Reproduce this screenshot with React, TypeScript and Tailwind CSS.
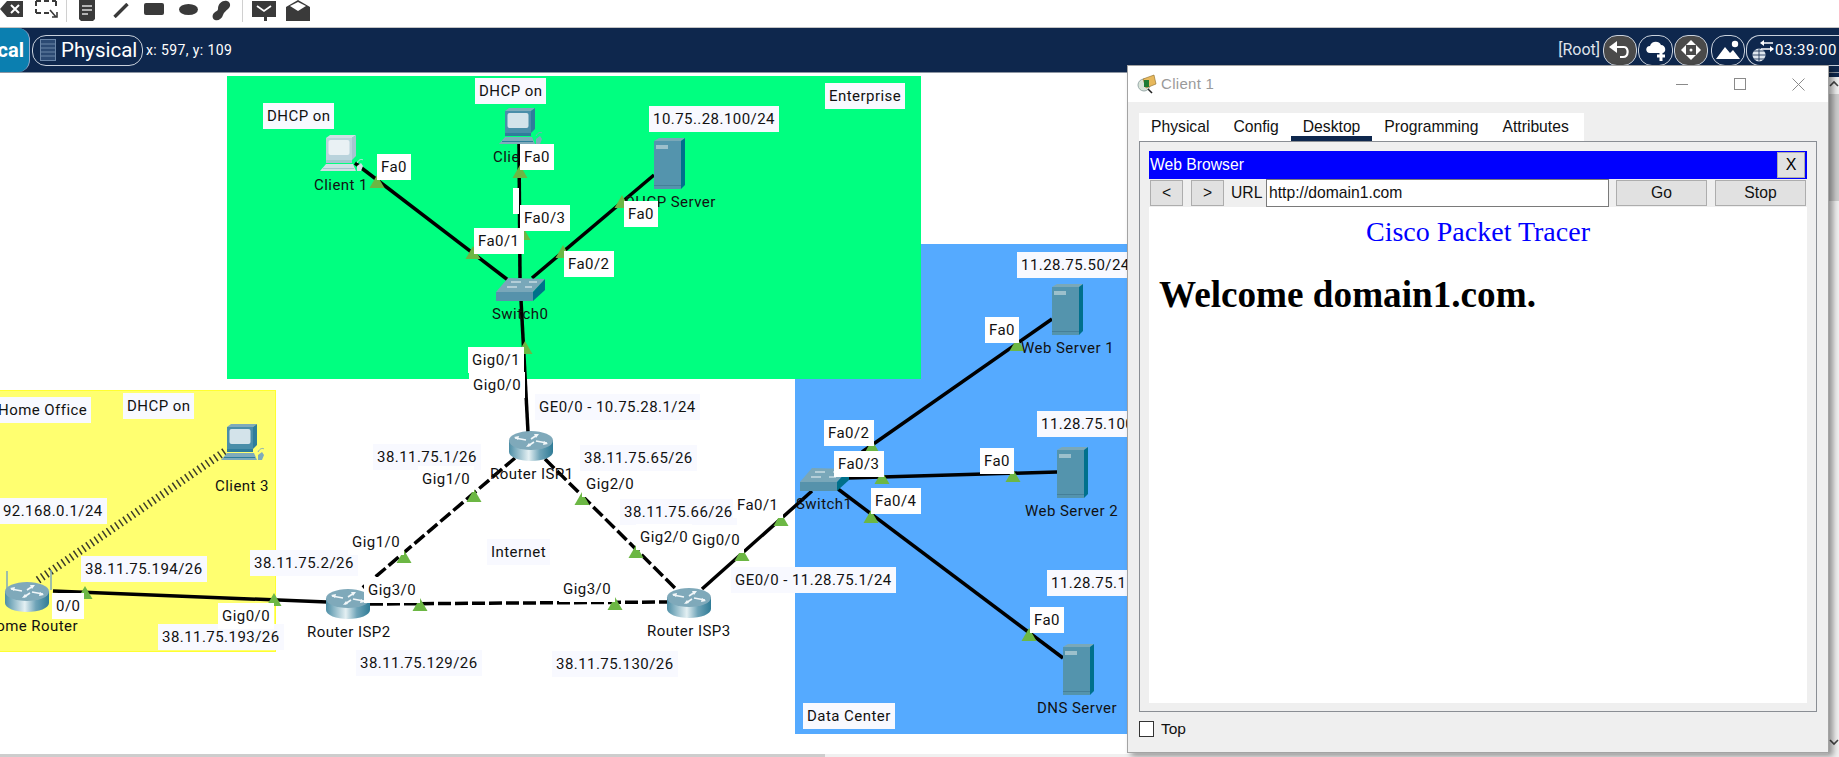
/**
 * Packet Tracer physical workspace with a Client 1 web browser window on top.
 */

import type { ReactNode } from "react";

const TRIANGLES: [number, number][] = [
  [377, 182], [520, 172], [473, 253], [523, 234], [563, 252], [622, 202], [525, 348],
  [1017, 345], [872, 447], [882, 478], [1013, 476], [871, 517], [1029, 635], [781, 520],
  [742, 555], [636, 552], [582, 499], [474, 496], [615, 604], [420, 605], [404, 557],
  [85, 593], [274, 600],
];

function Note({ className, children }: { className: string; children: ReactNode }) {
  return (
    <div className={`absolute h-[26px] bg-[#f8f9ff] px-[4px] text-[15px] leading-[26px] tracking-[0.45px] whitespace-nowrap text-[#111] ${className}`}>
      {children}
    </div>
  );
}

function Port({ className, children }: { className: string; children: ReactNode }) {
  return (
    <div className={`absolute h-[26px] bg-white px-[4px] text-[15px] leading-[26px] tracking-[0.45px] whitespace-nowrap text-[#111] ${className}`}>
      {children}
    </div>
  );
}

function Name({ className, children }: { className: string; children: ReactNode }) {
  return (
    <div className={`absolute h-[26px] text-[15px] leading-[26px] tracking-[0.45px] whitespace-nowrap text-[#111] ${className}`}>
      {children}
    </div>
  );
}

function Pc({ x, y, faded }: { x: number; y: number; faded?: boolean }) {
  const front = faded ? "#b9d3dc" : "#4a8ea9";
  const dark = faded ? "#a5c5d0" : "#2f7d9b";
  const screen = faded ? "#e9f1f4" : "#d3e3ea";
  const top = faded ? "#cfe0e6" : "#7fabbb";
  return (
    <g transform={`translate(${x} ${y})`}>
      <polygon points="6,3 10,0 36,0 32,3" fill={top} />
      <polygon points="32,3 36,0 36,21 32,25" fill={dark} />
      <rect x="6" y="3" width="26" height="22" fill={front} />
      <rect x="8.5" y="5" width="21" height="15" rx="2" fill={screen} />
      <rect x="6" y="25" width="26" height="3" fill={dark} />
      <polygon points="6,29 33,29 36,36 0,36" fill={top} />
      <rect x="3" y="33" width="31" height="1" fill={dark} />
      <path d="M37 28 C39 24 42 24 43 25" stroke={top} strokeWidth="1" fill="none" />
      <polygon points="37,31 41,28 43,31 41,36 37,36" fill={top} />
    </g>
  );
}

function Router({ x, y }: { x: number; y: number }) {
  return (
    <g transform={`translate(${x} ${y})`}>
      <path d="M0 9 V21 C0 26 10 30 22 30 C34 30 44 26 44 21 V9 Z" fill="url(#routerSide)" />
      <ellipse cx="22" cy="9.5" rx="22" ry="9.5" fill="#7fa9ba" />
      <g fill="none" stroke="#f2f7f9" strokeWidth="1.6">
        <path d="M6 7 L17 9" />
        <path d="M27 10 L38 12" />
        <path d="M19 15 L25 11" />
        <path d="M22 8 L28 4" />
      </g>
      <g fill="#f2f7f9">
        <polygon points="5,6 10,5 9,9" />
        <polygon points="39,13 34,14 35,10" />
        <polygon points="17,16 22,15 20,12" />
        <polygon points="30,3 25,3 27,7" />
      </g>
    </g>
  );
}

function Switch({ x, y }: { x: number; y: number }) {
  return (
    <g transform={`translate(${x} ${y})`}>
      <polygon points="12,0 49,1 37,14 0,14" fill="#79a7b9" />
      <rect x="0" y="14" width="37" height="9" fill="#5692ab" />
      <polygon points="37,14 49,1 49,12 37,23" fill="#00708a" />
      <g stroke="#eef5f7" strokeWidth="1">
        <path d="M15 4 H25" />
        <path d="M33 4 H41" />
        <path d="M11 9 H21" />
        <path d="M29 9 H36" />
      </g>
    </g>
  );
}

function Server({ x, y }: { x: number; y: number }) {
  return (
    <g transform={`translate(${x} ${y})`}>
      <polygon points="0,3 5,0 31,0 27,3" fill="#7aa8b8" />
      <rect x="0" y="3" width="27" height="48" fill="#5494ad" />
      <polygon points="27,3 31,0 31,47 27,51" fill="#00708c" />
      <rect x="2" y="7" width="12" height="4" fill="#9cc0cc" />
      <rect x="0" y="47" width="27" height="1" fill="#457f98" />
    </g>
  );
}

function Toolbar() {
  return (
    <div className="flex h-[28px] items-start border-b border-[#c4c4c4] bg-white">
      {/* Delete */}
      <svg className="ml-[0px] h-[18px] w-[24px]" viewBox="0 0 24 18">
        <path d="M7 1 H23 V17 H7 L0 9 Z" fill="#3a3a3a" />
        <path d="M11 5 L19 13 M19 5 L11 13" stroke="#fff" strokeWidth="2" />
      </svg>
      {/* Resize marquee */}
      <svg className="ml-[11px] h-[19px] w-[23px]" viewBox="0 0 23 19">
        <path d="M1 1 H21 M1 13 H14 M1 1 V13 M21 1 V9" stroke="#3a3a3a" strokeWidth="2" strokeDasharray="5 3" fill="none" />
        <path d="M15 10 L21 17 M17 17 H22 V12" stroke="#3a3a3a" strokeWidth="1.6" fill="none" />
      </svg>
      <div className="ml-[8px] h-[22px] w-px bg-[#d0d0d0]" />
      {/* Note */}
      <svg className="ml-[12px] h-[21px] w-[16px]" viewBox="0 0 16 21">
        <path d="M0 0 H16 V19 L14 21 H2 L0 19 Z" fill="#3a3a3a" />
        <path d="M3 6 H13 M3 10 H13 M3 14 H9" stroke="#ddd" strokeWidth="1.3" />
      </svg>
      {/* Line */}
      <svg className="ml-[18px] mt-[3px] h-[15px] w-[16px]" viewBox="0 0 16 15">
        <path d="M1.5 14 L14.5 1" stroke="#3a3a3a" strokeWidth="3.4" />
      </svg>
      {/* Rectangle */}
      <div className="ml-[15px] mt-[3px] h-[12px] w-[20px] rounded-[2px] bg-[#3a3a3a]" />
      {/* Ellipse */}
      <div className="ml-[15px] mt-[4px] h-[11px] w-[19px] rounded-[50%] bg-[#3a3a3a]" />
      {/* Freeform */}
      <svg className="ml-[14px] h-[21px] w-[19px]" viewBox="0 0 19 21">
        <path d="M6 9 C6 3 11 0 15 1 C19 2 19 7 16 9 C14 11 12 12 11 15 C10 19 6 21 3 20 C0 19 0 15 2 13 C4 11 6 11 6 9 Z" fill="#3a3a3a" />
      </svg>
      <div className="ml-[11px] h-[22px] w-px bg-[#d0d0d0]" />
      {/* Mail */}
      <svg className="ml-[9px] h-[22px] w-[24px]" viewBox="0 0 24 22">
        <path d="M0 1 H24 V17 H15 V21 H12 V17 H0 Z" fill="#3a3a3a" />
        <path d="M5 6 L12 11 L19 6" stroke="#fff" strokeWidth="1.8" fill="none" />
      </svg>
      {/* Open mail */}
      <svg className="ml-[10px] h-[21px] w-[24px]" viewBox="0 0 24 21">
        <path d="M0 7 L12 0 L24 7 V21 H0 Z" fill="#3a3a3a" />
        <path d="M4 6 L12 2 L20 6 L12 11 Z" fill="#fff" />
      </svg>
    </div>
  );
}

function ModeBar() {
  return (
    <div className="relative flex h-[45px] items-center border-b border-[#8d96a3] bg-[#0e274d] font-['Roboto',sans-serif] text-white">
      <div className="flex h-[44px] w-[30px] items-center justify-end self-start rounded-r-[12px] border-r border-[#9ac] bg-[#0b7fb0] text-[20px] font-bold">
        <span className="pr-[5px]">cal</span>
      </div>
      <div className="ml-[2px] flex h-[31px] w-[111px] items-center rounded-[14px] border border-[#c9d1dc] pl-[7px]">
        <svg className="h-[22px] w-[16px]" viewBox="0 0 16 22">
          <rect x="0.5" y="0.5" width="15" height="21" fill="#2c4a73" stroke="#6b86a8" />
          <path d="M0 5 H16 M0 9 H16 M0 13 H16 M0 17 H16" stroke="#6b86a8" />
        </svg>
        <span className="ml-[5px] text-[20.5px]">Physical</span>
      </div>
      <span className="ml-[3px] text-[14px] tracking-[0.4px]">x: 597, y: 109</span>
      <div className="ml-auto flex items-center">
        <span className="mr-[3px] text-[16px] text-[#dfe3ea]">[Root]</span>
        <div className="flex h-[31px] w-[34px] items-center justify-center rounded-[14px] border border-[#c9d1dc] bg-[#4a4a4a]">
          <svg className="h-[20px] w-[24px]" viewBox="0 0 24 20">
            <path d="M8 7 H16 C21 7 21 17 15 17 H12" stroke="#fff" strokeWidth="2.2" fill="none" />
            <polygon points="9,1 1,7 9,13" fill="#fff" />
          </svg>
        </div>
        <div className="ml-[1px] flex h-[31px] w-[35px] items-center justify-center rounded-[14px] border border-[#c9d1dc]">
          <svg className="h-[24px] w-[24px]" viewBox="0 0 24 24">
            <path d="M6 15 C1 15 1 8 6 8 C7 3 15 2 17 7 C22 7 23 15 18 15 Z" fill="#fff" />
            <path d="M17 13 V23 M13 18 H21" stroke="#fff" strokeWidth="3" />
          </svg>
        </div>
        <div className="ml-[1px] flex h-[31px] w-[34px] items-center justify-center rounded-[14px] border border-[#c9d1dc] bg-[#4a4a4a]">
          <svg className="h-[24px] w-[24px]" viewBox="0 0 24 24" fill="#fff">
            <polygon points="12,2 17,7 7,7" />
            <polygon points="12,22 17,17 7,17" />
            <polygon points="2,12 7,7 7,17" />
            <polygon points="22,12 17,7 17,17" />
            <circle cx="12" cy="12" r="1.5" />
          </svg>
        </div>
        <div className="ml-[3px] flex h-[31px] w-[34px] items-center justify-center rounded-[14px] border border-[#c9d1dc]">
          <svg className="h-[22px] w-[24px]" viewBox="0 0 24 22" fill="#fff">
            <circle cx="19" cy="5" r="3.2" />
            <polygon points="0,20 9,8 14,14 17,11 24,20" />
          </svg>
        </div>
        <div className="ml-[1px] flex h-[31px] w-[93px] items-center rounded-l-[14px] border border-r-0 border-[#c9d1dc] pl-[3px]">
          <svg className="h-[26px] w-[24px]" viewBox="0 0 24 26">
            <circle cx="9" cy="18" r="6.5" fill="#dfe6ee" />
            <path d="M2.5 18 H15.5 M9 11.5 V24.5 M4 14 H14 M4 22 H14" stroke="#0e274d" strokeWidth="0.8" />
            <path d="M13 6 H23 M11 12 H23" stroke="#fff" strokeWidth="1.6" />
            <polygon points="10,6 14,3 14,9" fill="#fff" />
            <polygon points="24,12 20,9 20,15" fill="#fff" />
          </svg>
          <span className="ml-[1px] text-[15px] tracking-[0.5px]">03:39:00</span>
        </div>
      </div>
    </div>
  );
}

function Workspace() {
  return (
    <div className="relative h-[681px] overflow-hidden bg-white font-['Roboto',sans-serif]">
      {/* Areas */}
      <div className="absolute left-[795px] top-[171px] h-[490px] w-[340px] bg-[#55aaff]" />
      <div className="absolute left-[227px] top-[3px] h-[303px] w-[694px] bg-[#00ff80]" />
      <div className="absolute left-[-2px] top-[317px] h-[262px] w-[278px] border border-[#ffff30] bg-[#ffff70]" />

      {/* Links and devices */}
      <svg className="absolute left-0 top-0 h-[681px] w-[1839px]" viewBox="0 73 1839 681">
        <defs>
          <linearGradient id="routerSide" x1="0" x2="1" y1="0" y2="0">
            <stop offset="0" stopColor="#4d8ea6" />
            <stop offset="0.45" stopColor="#e4f0f3" />
            <stop offset="0.7" stopColor="#6fa4b8" />
            <stop offset="1" stopColor="#2f7b96" />
          </linearGradient>
        </defs>
        <g stroke="#000" strokeWidth="3.5" fill="none">
          <path d="M355 163 L508 280" />
          <path d="M519 144 L520 278" />
          <path d="M654 175 L532 278" />
          <path d="M521 300 L528 432" />
          <path d="M1052 319 L862 452" />
          <path d="M1057 472 L848 478" />
          <path d="M1063 658 L838 489" />
          <path d="M812 491 L702 589" />
          <path d="M53 591 L327 602" />
          <path d="M545 459 L677 590" strokeDasharray="13 4" />
          <path d="M515 458 L360 590" strokeDasharray="13 4" />
          <path d="M370 604 L667 602" strokeDasharray="13 4" />
          <path d="M38 580 L227 450" stroke="#3c3c2a" strokeWidth="8" strokeDasharray="1.5 3.5" />
        </g>
        {TRIANGLES.map(([cx, cy]) => (
          <polygon key={`${cx}-${cy}`} points={`${cx - 7.5},${cy + 6} ${cx + 7.5},${cy + 6} ${cx},${cy - 7}`} fill="#6cb744" />
        ))}
        <Pc x={320} y={135} faded />
        <Pc x={499} y={108} />
        <Pc x={221} y={424} />
        <Server x={654} y={138} />
        <Server x={1052} y={284} />
        <Server x={1057} y={447} />
        <Server x={1063} y={644} />
        <Switch x={496} y={278} />
        <Switch x={800} y={468} />
        <Router x={509} y={431} />
        <Router x={326} y={589} />
        <Router x={667} y={588} />
        <Router x={5} y={582} />
        <path d="M7 571 V590 M51 570 V590" stroke="#7fa9ba" strokeWidth="1.5" />
      </svg>

      {/* Device names */}
      <Name className="left-[314px] top-[99px]">Client 1</Name>
      <Name className="left-[493px] top-[71px]">Client 2</Name>
      <Name className="left-[625px] top-[116px]">DHCP Server</Name>
      <Name className="left-[492px] top-[228px]">Switch0</Name>
      <Name className="left-[490px] top-[388px]">Router ISP1</Name>
      <Name className="left-[307px] top-[546px]">Router ISP2</Name>
      <Name className="left-[647px] top-[545px]">Router ISP3</Name>
      <Name className="left-[-15px] top-[540px]">Home Router</Name>
      <Name className="left-[215px] top-[400px]">Client 3</Name>
      <Name className="left-[796px] top-[418px]">Switch1</Name>
      <Name className="left-[1021px] top-[262px]">Web Server 1</Name>
      <Name className="left-[1025px] top-[425px]">Web Server 2</Name>
      <Name className="left-[1037px] top-[622px]">DNS Server</Name>

      {/* Notes */}
      <Note className="left-[263px] top-[30px]">DHCP on</Note>
      <Note className="left-[475px] top-[5px]">DHCP on</Note>
      <Note className="left-[649px] top-[33px]">10.75..28.100/24</Note>
      <Note className="left-[825px] top-[10px]">Enterprise</Note>
      <Note className="left-[-6px] top-[324px]">Home Office</Note>
      <Note className="left-[123px] top-[320px]">DHCP on</Note>
      <Note className="left-[-10px] top-[425px]">192.168.0.1/24</Note>
      <Note className="left-[81px] top-[483px]">38.11.75.194/26</Note>
      <Note className="left-[250px] top-[477px]">38.11.75.2/26</Note>
      <Note className="left-[158px] top-[551px]">38.11.75.193/26</Note>
      <Note className="left-[356px] top-[577px]">38.11.75.129/26</Note>
      <Note className="left-[552px] top-[578px]">38.11.75.130/26</Note>
      <Note className="left-[373px] top-[371px]">38.11.75.1/26</Note>
      <Note className="left-[580px] top-[372px]">38.11.75.65/26</Note>
      <Note className="left-[620px] top-[426px]">38.11.75.66/26</Note>
      <Note className="left-[487px] top-[466px]">Internet</Note>
      <Note className="left-[535px] top-[321px]">GE0/0 - 10.75.28.1/24</Note>
      <Note className="left-[731px] top-[494px]">GE0/0 - 11.28.75.1/24</Note>
      <Note className="left-[1017px] top-[179px]">11.28.75.50/24</Note>
      <Note className="left-[1037px] top-[338px]">11.28.75.100/24</Note>
      <Note className="left-[1047px] top-[497px]">11.28.75.150/24</Note>
      <Note className="left-[803px] top-[630px]">Data Center</Note>

      {/* Port labels */}
      <div className="absolute left-[513px] top-[115px] h-[26px] w-[6px] bg-white" />
      <Port className="left-[377px] top-[81px]">Fa0</Port>
      <Port className="left-[520px] top-[71px]">Fa0</Port>
      <Port className="left-[520px] top-[132px]">Fa0/3</Port>
      <Port className="left-[474px] top-[155px]">Fa0/1</Port>
      <Port className="left-[564px] top-[178px]">Fa0/2</Port>
      <Port className="left-[624px] top-[128px]">Fa0</Port>
      <Port className="left-[468px] top-[274px]">Gig0/1</Port>
      <Port className="left-[469px] top-[299px]">Gig0/0</Port>
      <Port className="left-[418px] top-[393px]">Gig1/0</Port>
      <Port className="left-[582px] top-[398px]">Gig2/0</Port>
      <Port className="left-[636px] top-[451px]">Gig2/0</Port>
      <Port className="left-[688px] top-[454px]">Gig0/0</Port>
      <Port className="left-[733px] top-[419px]">Fa0/1</Port>
      <Port className="left-[348px] top-[456px]">Gig1/0</Port>
      <Port className="left-[364px] top-[504px]">Gig3/0</Port>
      <Port className="left-[559px] top-[503px]">Gig3/0</Port>
      <Port className="left-[218px] top-[530px]">Gig0/0</Port>
      <Port className="left-[52px] top-[520px]">0/0</Port>
      <Port className="left-[824px] top-[347px]">Fa0/2</Port>
      <Port className="left-[834px] top-[378px]">Fa0/3</Port>
      <Port className="left-[871px] top-[415px]">Fa0/4</Port>
      <Port className="left-[985px] top-[244px]">Fa0</Port>
      <Port className="left-[980px] top-[375px]">Fa0</Port>
      <Port className="left-[1030px] top-[534px]">Fa0</Port>
    </div>
  );
}

function ClientWindow() {
  return (
    <div className="absolute left-[1127px] top-[65px] flex h-[688px] w-[702px] flex-col border border-[#a3a3a3] bg-[#efefef] font-['Liberation_Sans',sans-serif] shadow-[4px_3px_6px_rgba(0,0,0,0.4)]">
      {/* Title bar */}
      <div className="flex h-[36px] items-center bg-white pl-[9px]">
        <svg className="h-[20px] w-[20px]" viewBox="0 0 20 20">
          <circle cx="7" cy="11" r="6" fill="#d9e4d8" stroke="#9aa" />
          <path d="M11 15 L15 19" stroke="#222" strokeWidth="1.6" />
          <polygon points="6,5 17,1 19,10 9,14" fill="#e7b85c" stroke="#8a6a25" strokeWidth="0.6" />
          <rect x="7" y="6" width="5" height="7" fill="#1d7a32" />
        </svg>
        <span className="ml-[4px] text-[15px] tracking-[0.3px] text-[#9a9a9a]">Client 1</span>
        <div className="ml-auto flex items-center">
          <div className="h-px w-[12px] bg-[#8a8a8a]" />
          <div className="ml-[46px] h-[12px] w-[12px] border border-[#8a8a8a]" />
          <svg className="ml-[46px] mr-[23px] h-[13px] w-[13px]" viewBox="0 0 13 13">
            <path d="M0.5 0.5 L12.5 12.5 M12.5 0.5 L0.5 12.5" stroke="#8a8a8a" />
          </svg>
        </div>
      </div>

      {/* Tabs */}
      <div className="ml-[11px] mt-[11px] flex h-[28px] w-[445px] bg-white text-[15.7px] text-[#111]">
        <div className="flex items-center px-[12px]">Physical</div>
        <div className="flex items-center px-[12px]">Config</div>
        <div className="flex items-center border-b-[5px] border-[#0e274d] px-[12px] pt-[5px]">Desktop</div>
        <div className="flex items-center px-[12px]">Programming</div>
        <div className="flex items-center px-[12px]">Attributes</div>
      </div>

      {/* Desktop panel */}
      <div className="mx-[11px] flex h-[571px] flex-col border border-[#8a8e94] px-[9px] pb-[8px] pt-[9px]">
        <div className="flex h-[28px] items-center border border-[#0000ff] bg-[#0000ff] pr-px">
          <span className="flex-1 text-[15.7px] text-white">Web Browser</span>
          <div className="flex h-[26px] w-[28px] items-center justify-center border border-[#adadad] bg-[#e1e1e1] text-[16px] text-black">X</div>
        </div>
        <div className="flex h-[28px] items-center text-[15.7px] text-[#111]">
          <div className="ml-px flex h-[26px] w-[33px] items-center justify-center border border-[#adadad] bg-[#e1e1e1]">&lt;</div>
          <div className="ml-[8px] flex h-[26px] w-[33px] items-center justify-center border border-[#adadad] bg-[#e1e1e1]">&gt;</div>
          <span className="ml-[7px] w-[35px]">URL</span>
          <div className="flex h-[28px] w-[343px] items-center border border-[#7a7a7a] bg-white pl-[2px]">http://domain1.com</div>
          <div className="ml-[7px] flex h-[26px] w-[91px] items-center justify-center border border-[#adadad] bg-[#e1e1e1]">Go</div>
          <div className="ml-[8px] flex h-[26px] w-[91px] items-center justify-center border border-[#adadad] bg-[#e1e1e1]">Stop</div>
        </div>
        <div className="flex-1 bg-white font-['Liberation_Serif',serif]">
          <div className="mt-[9px] text-center text-[28px] leading-[32px] text-[#0000ff]">Cisco Packet Tracer</div>
          <div className="mt-[25px] pl-[10px] text-[37.2px] leading-[44px] font-bold text-black">Welcome domain1.com.</div>
        </div>
      </div>

      {/* Top checkbox */}
      <div className="ml-[11px] mt-[9px] flex h-[16px] items-center text-[15.5px] text-[#111]">
        <div className="h-[16px] w-[15px] border border-[#333] bg-white" />
        <span className="ml-[7px]">Top</span>
      </div>
    </div>
  );
}

export default function App() {
  return (
    <div className="relative h-[757px] w-[1839px] overflow-hidden bg-white">
      <Toolbar />
      <ModeBar />
      <Workspace />

      {/* Horizontal scrollbar */}
      <div className="h-[3px] bg-[#f0f0f0]">
        <div className="h-full w-[825px] bg-[#cdcdcd]" />
      </div>

      {/* Vertical scrollbar */}
      <div className="absolute right-0 top-[73px] flex h-[684px] w-[11px] flex-col items-center bg-[#f0f0f0]">
        <div className="h-[4px] w-full bg-[#0e274d]" />
        <svg className="mt-[3px] h-[8px] w-[10px]" viewBox="0 0 10 8">
          <path d="M1 6 L5 2 L9 6" stroke="#444" strokeWidth="1.6" fill="none" />
        </svg>
        <div className="mt-[6px] h-[107px] w-full bg-[#cdcdcd]" />
        <svg className="mt-auto mb-[11px] h-[8px] w-[10px]" viewBox="0 0 10 8">
          <path d="M1 2 L5 6 L9 2" stroke="#444" strokeWidth="1.6" fill="none" />
        </svg>
      </div>

      <ClientWindow />
    </div>
  );
}
